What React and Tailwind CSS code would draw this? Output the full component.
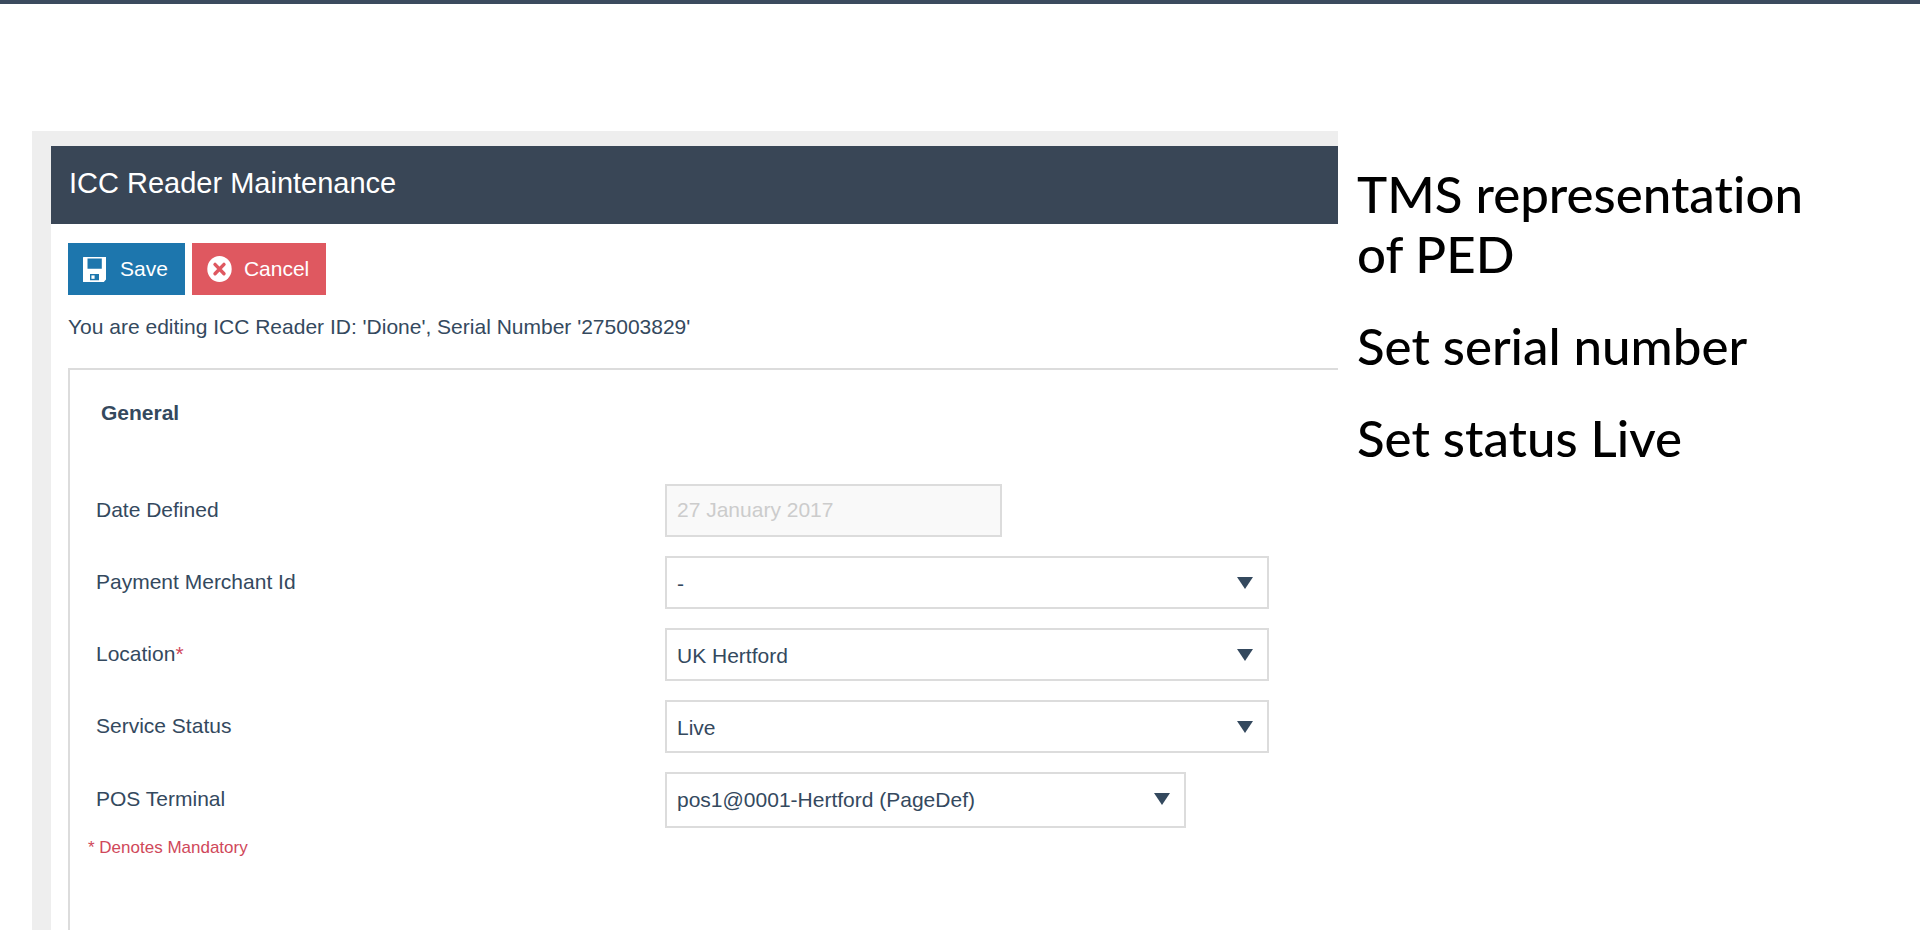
const notes = ["TMS representation of PED", "Set serial number", "Set status Live"];

const fields = [
  {
    id: "merchant",
    label: "Payment Merchant Id",
    options: ["-"],
    size: "h-[53px] w-[604px] pt-[3px]",
  },
  {
    id: "location",
    label: "Location",
    required: true,
    options: ["UK Hertford"],
    size: "h-[53px] w-[604px] pt-[3px]",
  },
  {
    id: "status",
    label: "Service Status",
    options: ["Live"],
    size: "h-[53px] w-[604px] pt-[3px]",
  },
  {
    id: "terminal",
    label: "POS Terminal",
    options: ["pos1@0001-Hertford (PageDef)"],
    size: "h-[56px] w-[521px]",
  },
];

function SaveIcon() {
  return (
    <svg viewBox="0 0 23 25" className="h-[25px] w-[23px]" aria-hidden="true">
      <path
        fill="#fff"
        fillRule="evenodd"
        d="M0 .6Q0 0 .6 0H23V22.6L20.8 25H.6Q0 25 0 24.4ZM4.5 1.4V11.8H18.8V1.4ZM7 17V23.2H16V17Z"
      />
      <path fill="#fff" d="M8.4 18.4h3.2v3.4H8.4z" />
    </svg>
  );
}

function CancelIcon() {
  return (
    <svg viewBox="0 0 25 26" className="h-[26px] w-[25px]" aria-hidden="true">
      <ellipse cx="12.5" cy="13" rx="12.2" ry="13" fill="#fff" />
      <path
        d="M8 8.4l9 9.4M17 8.4l-9 9.4"
        stroke="#df5860"
        strokeWidth="3.4"
        strokeLinecap="round"
      />
    </svg>
  );
}

function SelectField({ field }) {
  return (
    <div className="flex items-center">
      <label htmlFor={field.id} className="w-[569px] shrink-0 pb-0.5">
        {field.label}
        {field.required && <span className="text-[#d0485a]">*</span>}
      </label>
      <div className="relative">
        <select
          id={field.id}
          className={`block appearance-none border-2 border-[#dcdcdc] bg-white pl-2.5 pr-12 ${field.size}`}
        >
          {field.options.map((option) => (
            <option key={option}>{option}</option>
          ))}
        </select>
        <svg
          viewBox="0 0 16 12"
          className="pointer-events-none absolute top-[21px] right-4 h-3 w-4"
          aria-hidden="true"
        >
          <path d="M0 0h16L8 12z" fill="#34495e" />
        </svg>
      </div>
    </div>
  );
}

export default function App() {
  return (
    <div className="flex min-h-screen flex-col border-t-4 border-[#3b4b5e] bg-white font-['Liberation_Sans',Arial,sans-serif] text-[21px] leading-6 text-[#34495e]">
      <main className="flex flex-1 pt-[127px] pl-8">
        <section className="flex min-w-0 flex-1 flex-col bg-[#eeeeee] pt-[15px] pl-[19px]">
          <header className="flex h-[78px] items-center bg-[#394656] pb-1 pl-[18px]">
            <h1 className="text-[29px] leading-8 text-white">ICC Reader Maintenance</h1>
          </header>

          <form
            className="flex flex-1 flex-col bg-white pt-[19px] pl-[17px]"
            onSubmit={(e) => e.preventDefault()}
          >
            <div className="flex gap-[7px]">
              <button
                type="submit"
                className="flex h-[52px] items-center gap-3.5 bg-[#1d76ad] pr-[17px] pl-[15px] text-white"
              >
                <SaveIcon />
                Save
              </button>
              <button
                type="button"
                className="flex h-[52px] items-center gap-3 bg-[#df5860] pr-[17px] pl-[15px] text-white"
              >
                <CancelIcon />
                Cancel
              </button>
            </div>
            <p className="mt-5">
              You are editing ICC Reader ID: 'Dione', Serial Number '275003829'
            </p>

            <div className="mt-[29px] flex-1 border-t-2 border-l-2 border-[#dcdcdc] pt-[31px] pl-[26px]">
              <h2 className="pl-[5px] font-bold">General</h2>
              <div className="mt-[59px] flex flex-col gap-[19px]">
                <div className="flex items-center">
                  <label htmlFor="defined" className="w-[569px] shrink-0 pb-0.5">
                    Date Defined
                  </label>
                  <input
                    id="defined"
                    type="text"
                    disabled
                    defaultValue="27 January 2017"
                    className="h-[53px] w-[337px] border-2 border-[#dcdcdc] bg-[#f9f9f9] px-2.5 pb-0.5 text-[#cccccc]"
                  />
                </div>
                {fields.map((field) => (
                  <SelectField key={field.id} field={field} />
                ))}
              </div>
              <p className="-ml-2 mt-2 text-[17px] text-[#d0485a]">* Denotes Mandatory</p>
            </div>
          </form>
        </section>

        <aside className="w-[582px] shrink-0 pt-[33px] pr-[100px] pl-[19px] font-['Lato',sans-serif] text-[51px] leading-[60px] font-medium text-black [font-variant-ligatures:none]">
          {notes.map((note) => (
            <p key={note} className="mb-8">
              {note}
            </p>
          ))}
        </aside>
      </main>
    </div>
  );
}
